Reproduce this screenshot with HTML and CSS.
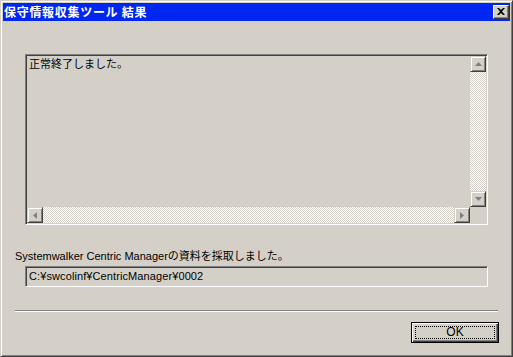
FILE: index.html
```html
<!DOCTYPE html>
<html lang="ja">
<head>
<meta charset="utf-8">
<title>保守情報収集ツール 結果</title>
<link rel="stylesheet" href="styles.css">
</head>
<body>
<div class="window">
  <div class="titlebar">
    <span class="title">保守情報収集ツール 結果</span>
    <button class="close" aria-label="閉じる">
      <svg width="8" height="7" viewBox="0 0 8 7"><path d="M0 0h2l2 2 2-2h2L5 3.5 8 7H6L4 5 2 7H0l3-3.5z" fill="#000"/></svg>
    </button>
  </div>
  <div class="content">
    <div class="textbox">
      <div class="text">正常終了しました。</div>
      <div class="vscroll">
        <div class="sbtn"><svg width="7" height="4" viewBox="0 0 7 4"><path d="M3.5 0L7 4H0z" fill="#808080"/></svg></div>
        <div class="track"></div>
        <div class="sbtn"><svg width="7" height="4" viewBox="0 0 7 4"><path d="M0 0h7L3.5 4z" fill="#808080"/></svg></div>
      </div>
      <div class="hscroll">
        <div class="sbtn"><svg width="4" height="7" viewBox="0 0 4 7"><path d="M4 0v7L0 3.5z" fill="#808080"/></svg></div>
        <div class="track"></div>
        <div class="sbtn"><svg width="4" height="7" viewBox="0 0 4 7"><path d="M0 0l4 3.5L0 7z" fill="#808080"/></svg></div>
      </div>
      <div class="corner"></div>
    </div>
    <div class="label">Systemwalker Centric Managerの資料を採取しました。</div>
    <div class="field">C:¥swcolinf¥CentricManager¥0002</div>
    <div class="separator"></div>
    <div class="buttons">
      <button class="ok"><span class="focus">OK</span></button>
    </div>
  </div>
</div>
</body>
</html>
```
FILE: styles.css
```css
* { box-sizing: border-box; }
html, body { margin: 0; padding: 0; background: #d4d0c8; }
body {
  font-family: "Liberation Sans", "Noto Sans CJK JP", sans-serif;
  font-size: 11px;
  color: #000;
}
.window {
  width: 513px;
  height: 357px;
  background: #d4d0c8;
  border: 1px solid;
  border-color: #d4d0c8 #404040 #404040 #d4d0c8;
  box-shadow: inset 1px 1px #fff, inset -1px -1px #808080;
  padding: 2px;
  display: flex;
  flex-direction: column;
}
.titlebar {
  height: 18px;
  background: #0026f2;
  display: flex;
  align-items: center;
  justify-content: space-between;
  padding: 0 1px 0 1px;
}
.title {
  color: #fff;
  font-family: "Noto Sans CJK JP", sans-serif;
  font-weight: bold;
  font-size: 12px;
  line-height: 14px;
  letter-spacing: 0.7px;
}
.close {
  width: 16px;
  height: 14px;
  padding: 0;
  margin: 0;
  background: #d4d0c8;
  border: 1px solid;
  border-color: #fff #404040 #404040 #fff;
  box-shadow: inset -1px -1px #808080;
  display: flex;
  align-items: center;
  justify-content: center;
}
.close svg { display: block; margin: 0 1px 1px 0; }
.content {
  flex: 1;
  padding: 33px 12px 0 12px;
  display: flex;
  flex-direction: column;
}
.textbox {
  margin: 0 10px;
  height: 171px;
  border: 1px solid;
  border-color: #808080 #fff #fff #808080;
  box-shadow: inset 1px 1px #404040, inset -1px -1px #d4d0c8;
  padding: 1px;
  display: grid;
  grid-template-columns: 1fr 16px;
  grid-template-rows: 1fr 16px;
}
.text {
  padding: 1px 2px;
  line-height: 13px;
  font-family: "Noto Sans CJK JP", sans-serif;
  font-size: 11px;
}
.vscroll {
  display: flex;
  flex-direction: column;
}
.hscroll {
  display: flex;
}
.track {
  flex: 1;
  background: repeating-conic-gradient(#fff 0 25%, #d4d0c8 0 50%) 0 0 / 2px 2px;
}
.sbtn {
  width: 16px;
  height: 16px;
  background: #d4d0c8;
  border: 1px solid;
  border-color: #d4d0c8 #404040 #404040 #d4d0c8;
  box-shadow: inset 1px 1px #fff, inset -1px -1px #808080;
  display: flex;
  align-items: center;
  justify-content: center;
}
.sbtn svg { display: block; }
.corner { background: #d4d0c8; }
.label {
  margin-top: 25px;
  line-height: 13px;
  height: 13px;
}
.field {
  margin: 3px 10px 0 10px;
  height: 21px;
  border: 1px solid;
  border-color: #808080 #fff #fff #808080;
  box-shadow: inset 1px 1px #404040, inset -1px -1px #d4d0c8;
  padding: 0 3px;
  display: flex;
  align-items: center;
  line-height: 13px;
  letter-spacing: 0.1px;
}
.separator {
  margin-top: 23px;
  height: 2px;
  border-top: 1px solid #808080;
  border-bottom: 1px solid #fff;
}
.buttons {
  margin-top: 10px;
  display: flex;
  justify-content: flex-end;
}
.ok {
  width: 88px;
  height: 21px;
  padding: 3px;
  margin: 0 -1px 0 0;
  background: #d4d0c8;
  border: 1px solid #000;
  box-shadow: inset 1px 1px #fff, inset -1px -1px #404040, inset -2px -2px #808080;
  font-family: "Liberation Sans", sans-serif;
  font-size: 12px;
  color: #000;
  display: flex;
}
.focus {
  flex: 1;
  border: 1px dotted #000;
  display: flex;
  align-items: center;
  justify-content: center;
  line-height: 11px;
}
```
